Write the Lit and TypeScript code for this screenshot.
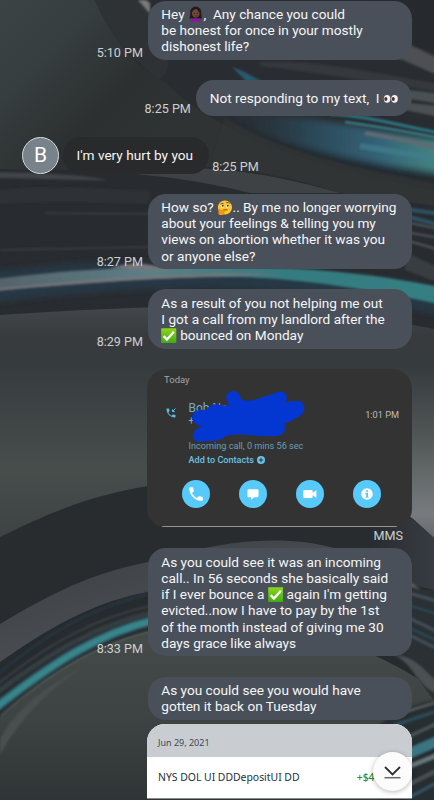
import { LitElement, html, css, svg } from "lit";
import { customElement, property } from "lit/decorators.js";

const woman = html`<svg class="emoji" viewBox="0 0 16 16">
  <path d="M8 .8C4.2.8 2.2 3.4 2.3 7c0 2.700-.3 4.600-1 6h13.400c-.7-1.400-1-3.300-1-6C13.800 3.400 11.800.8 8 .8z" fill="#211b1e"/>
  <ellipse cx="8" cy="7.400" rx="3.900" ry="4.600" fill="#71483b"/>
  <path d="M4 7c.3-2.600 2-3.300 5-4l2.800 4.200.4-3.200L8 1.500 4 3.500z" fill="#211b1e"/>
  <path d="M2.500 16c.1-2.400 1.600-3.200 5.500-3.200s5.400.8 5.500 3.200z" fill="#8d12a8"/>
  <circle cx="6.500" cy="7.600" r=".6" fill="#221513"/><circle cx="9.500" cy="7.600" r=".6" fill="#221513"/>
  <path d="M6.600 10q1.400.9 2.800 0" stroke="#3c1d18" stroke-width=".7" fill="none"/>
</svg>`;

const think = html`<svg class="emoji" viewBox="0 0 16 16">
  <circle cx="8.200" cy="7.700" r="7.300" fill="#fcc62e"/>
  <ellipse cx="5.600" cy="6.300" rx="1.500" ry="1.600" fill="#fff"/><ellipse cx="10.800" cy="6.300" rx="1.500" ry="1.600" fill="#fff"/>
  <circle cx="5.900" cy="5.900" r="1" fill="#3d2a20"/><circle cx="11.100" cy="5.900" r="1" fill="#3d2a20"/>
  <path d="M3.600 4.200q1.600-1 3.200-.4M9.600 2.900q2-.9 3.600.5M6.500 10.300q2.200-1 4.500 0" stroke="#6b4418" stroke-width=".9" fill="none"/>
  <path d="M2 9.800c.9-.7 1.500.1 1.600 1l4.600-.7c1.200 0 1.200 1.300.2 1.500l-1.700.4c1.300.5.9 3.900-2.200 4-2.700.1-3.600-2-2.500-6.200z" fill="#f09a1c" stroke="#c97410" stroke-width=".4"/>
</svg>`;

const check = html`<svg class="emoji" viewBox="0 0 16 16">
  <defs><linearGradient id="g" x1="0" y1="0" x2="0" y2="1"><stop stop-color="#8ed61b"/><stop offset="1" stop-color="#3dab12"/></linearGradient></defs>
  <rect x=".2" y=".2" width="15.600" height="15.600" rx=".6" fill="url(#g)"/>
  <path d="M2.800 8.400l3.300 3.500 7.200-8" stroke="#fff" stroke-width="2.400" fill="none"/>
</svg>`;

const eyes = html`<svg class="emoji" viewBox="0 0 16 16">
  <ellipse cx="4.200" cy="8" rx="3.400" ry="4" fill="#f4f1f0"/><ellipse cx="11.900" cy="8" rx="3.400" ry="4" fill="#f4f1f0"/>
  <ellipse cx="2.900" cy="8.200" rx="1.600" ry="2" fill="#4a3330"/><ellipse cx="10.600" cy="8.200" rx="1.600" ry="2" fill="#4a3330"/>
</svg>`;

const phonePath =
  "M6.600 10.800c1.400 2.800 3.800 5.100 6.600 6.600l2.200-2.200c.3-.3.700-.4 1-.2 1.100.4 2.300.6 3.600.6.600 0 1 .4 1 1V20c0 .6-.4 1-1 1C10.600 21 3 13.400 3 4c0-.6.400-1 1-1h3.500c.6 0 1 .4 1 1 0 1.200.2 2.400.6 3.600.1.300 0 .7-.2 1z";

const actions = [
  svg`<path d=${phonePath} transform="translate(-3.600 -3.600) scale(1.300)"/>`,
  svg`<path d="M4.500 4h15a2 2 0 0 1 2 2v9.500a2 2 0 0 1-2 2h-5.600L9 21.800v-4.300H4.500a2 2 0 0 1-2-2V6a2 2 0 0 1 2-2z"/>`,
  svg`<path d="M2 5.200h13a1.500 1.500 0 0 1 1.500 1.500v3.300L23 5.500v13L16.500 14v3.300a1.500 1.500 0 0 1-1.500 1.500H2a1.500 1.500 0 0 1-1.500-1.500V6.700A1.500 1.500 0 0 1 2 5.200z"/>`,
  svg`<circle cx="12" cy="12" r="10"/><path d="M10.600 5.700h3v2.600h-3zM9 10h4.600v6.500H15v1.700H9v-1.700h1.700v-4.800H9z" fill="#52bdec"/>`,
];

@customElement("wall-paper")
class WallPaper extends LitElement {
  static styles = css`
    :host { display: block; }
    svg { display: block; width: 434px; height: 800px; }
  `;
  render() {
    return html`<svg viewBox="0 0 434 800" fill="none">
      <defs>
        <linearGradient id="top" x1="0" y1="0" x2="150" y2="150" gradientUnits="userSpaceOnUse"><stop stop-color="#3b4444"/><stop offset=".35" stop-color="#363d3e"/><stop offset=".7" stop-color="#2c3031"/><stop offset="1" stop-color="#303333"/></linearGradient>
        <linearGradient id="mid" x1="0" y1="305" x2="0" y2="540" gradientUnits="userSpaceOnUse"><stop stop-color="#45484a"/><stop offset=".13" stop-color="#383b3d"/><stop offset=".25" stop-color="#363b3e"/><stop offset=".4" stop-color="#3c4243"/><stop offset=".7" stop-color="#464d4b"/><stop offset="1" stop-color="#3d4342"/></linearGradient>
        <linearGradient id="right" x1="0" y1="369" x2="0" y2="540" gradientUnits="userSpaceOnUse"><stop stop-color="#373c3f"/><stop offset=".4" stop-color="#515757"/><stop offset=".85" stop-color="#777b7d"/><stop offset="1" stop-color="#65696c"/></linearGradient>
        <linearGradient id="low" x1="0" y1="640" x2="0" y2="800" gradientUnits="userSpaceOnUse"><stop stop-color="#444a48"/><stop offset=".5" stop-color="#3d4342"/><stop offset="1" stop-color="#2f3436"/></linearGradient>
        <linearGradient id="beam" x1="0" y1="0" x2="434" y2="0" gradientUnits="userSpaceOnUse"><stop stop-color="#56636b"/><stop offset=".35" stop-color="#5d7f86"/><stop offset=".65" stop-color="#347b80"/><stop offset="1" stop-color="#347f83"/></linearGradient>
        <linearGradient id="blue" x1="225" y1="0" x2="434" y2="0" gradientUnits="userSpaceOnUse"><stop stop-color="#25333d" stop-opacity="0"/><stop offset=".4" stop-color="#2b4655"/><stop offset=".75" stop-color="#346478"/><stop offset="1" stop-color="#438281"/></linearGradient>
        <linearGradient id="band" x1="0" y1="550" x2="30" y2="650" gradientUnits="userSpaceOnUse"><stop stop-color="#3b4043"/><stop offset="1" stop-color="#484b50"/></linearGradient>
        <linearGradient id="shade" x1="370" y1="0" x2="434" y2="0" gradientUnits="userSpaceOnUse"><stop stop-color="#282c2f"/><stop offset="1" stop-color="#373c42"/></linearGradient>
        <filter id="b1" x="-10%" y="-50%" width="120%" height="200%"><feGaussianBlur stdDeviation=".8"/></filter>
        <filter id="b3" x="-10%" y="-50%" width="120%" height="200%"><feGaussianBlur stdDeviation="3"/></filter>
      </defs>
      <rect width="434" height="800" fill="url(#top)"/>
      <path d="M95 0C110 30 125 60 165 82C215 132 300 165 434 190V0z" fill="#292c30"/>
      <path d="M95 0C105 25 120 50 160 80C185 60 150 20 140 0z" fill="#2e3234"/>
      <g filter="url(#b1)">
        <path d="M138 0L150 14V3L146 0z" fill="#77797a"/>
        <path d="M370 30C395 46 415 48 434 53V-5H370z" fill="#282b2e"/>
        <path d="M400 42C414 46 425 52 440 59V76C420 68 405 60 396 58z" fill="#4d5053"/>
        <path d="M260 62C320 60 370 72 440 84V92C360 80 310 72 260 66z" fill="#35393d"/>
        <path d="M232 67C245 71 250 76 262 81H246z" fill="#2c5a70"/>
        <path d="M410 90L440 94V104L410 99z" fill="#4a5154"/>
        <path d="M410 103L440 106V117L405 110z" fill="#4b5152"/>
      </g>
      <g filter="url(#b3)">
        <path d="M218 114C290 110 370 130 445 141V174C350 161 280 145 218 114z" fill="url(#blue)"/>
        <path d="M230 121C300 153 370 162 445 177V184C340 171 275 152 230 121z" fill="#222b31"/>
      </g>
      <path d="M225 117C275 150 345 166 434 183V206C400 203 370 198 340 193C300 180 250 168 210 167z" fill="#303436" opacity=".75" filter="url(#b1)"/>
      <g filter="url(#b1)">
        <path d="M330 114C370 116 400 126 440 133" stroke="#2c7784" stroke-width="3"/>
        <path d="M345 122C380 127 405 131 440 138" stroke="#3a8994" stroke-width="2"/>
        <path d="M365 133C400 139 415 142 440 149" stroke="#626b72" stroke-width="4"/>
        <path d="M360 146C390 151 410 154 440 159" stroke="#3f7f8b" stroke-width="6" opacity=".7"/>
      </g>
      <path d="M0 169C70 173 120 166 190 167C250 167 300 180 340 193C380 200 410 202 434 206V350H0z" fill="#282b2f"/>
      <path d="M105 172C180 165 245 165 340 193H250C210 183 165 175 105 172z" fill="#3f4245"/>
      <g filter="url(#b1)">
        <path d="M-5 172C40 173 75 174 108 180C75 181 40 178 -5 178z" fill="#404447"/>
        <path d="M-5 190C70 183 100 190 150 190V204C90 202 40 202 -5 204z" fill="#2e3135"/>
        <path d="M45 213L150 214" stroke="#464a4c" stroke-width="1"/>
        <path d="M0 250L150 247" stroke="#3c4043" stroke-width="1.500"/>
        <path d="M405 209L440 214M405 216L440 225" stroke="#2d5362" stroke-width="4"/>
        <path d="M405 222L440 229M405 232L440 238M405 240L440 250" stroke="#50585a" stroke-width="2"/>
        <path d="M405 252L440 268V283L405 270z" fill="#383e3f"/>
      </g>
      <path d="M-10 272C120 255 260 258 445 288V316C270 277 130 286 -10 303z" fill="#253944" filter="url(#b3)"/>
      <g filter="url(#b1)">
        <path d="M-5 279C90 267 140 268 200 267C300 266 370 273 440 287V304C370 290 310 279 240 277C140 277 65 285 -5 291z" fill="url(#beam)"/>
        <path d="M-5 289C80 281 160 272 285 274C180 277 90 282 -5 291z" fill="#777579"/>
        <path d="M110 268C132 261 150 263 170 270z" fill="#78777a"/>
      </g>
      <path d="M0 315C75 310 130 307 200 307C310 307 380 318 434 329V550H0z" fill="url(#mid)"/>
      <path d="M400 369H434V545H400z" fill="url(#right)"/>
      <path d="M0 537C55 510 90 496 148 486C240 470 330 475 412 518L434 538V800H0z" fill="#282c2f"/>
      <path d="M370 500L412 518L434 538V620H370z" fill="url(#shade)"/>
      <path d="M0 624C65 585 100 572 148 562C220 541 280 534 330 547C350 552 368 562 380 570V690H0z" fill="url(#band)"/>
      <path d="M0 662C60 620 100 601 148 592C260 575 380 575 434 590V800H0z" fill="#262b2e"/>
      <g filter="url(#b1)">
        <path d="M-5 676C55 627 95 607 155 592" stroke="#27343e" stroke-width="3"/>
        <path d="M-5 686C50 643 95 617 155 605" stroke="#42474a" stroke-width="1.500"/>
        <path d="M-5 694C50 653 95 625 155 612" stroke="#363c40" stroke-width="5"/>
        <path d="M-6 709C55 661 100 633 155 620" stroke="#2d5664" stroke-width="10"/>
        <path d="M-6 709C55 661 100 633 155 620" stroke="#39858a" stroke-width="6"/>
      </g>
      <path d="M0 717C50 671 100 642 155 630C250 610 360 635 434 690V800H0z" fill="url(#low)"/>
      <path d="M0 716C50 671 100 642 155 630" stroke="#565c5b" stroke-width="1.500" filter="url(#b1)"/>
      <path d="M0 740C15 708 50 684 85 666C50 688 20 718 0 755z" fill="#484f4e" filter="url(#b1)"/>
      <path d="M390 590L434 590V700C420 684 412 665 390 648z" fill="#2b3034"/>
      <g filter="url(#b1)">
        <path d="M398 572L421 590L400 584z" fill="#5a5e62"/>
        <path d="M405 592L440 602M405 616L440 633M405 633L440 650" stroke="#44515a" stroke-width="3"/>
        <path d="M405 604L440 615M405 626L440 642" stroke="#274d5c" stroke-width="2"/>
        <path d="M394 655C414 657 419 664 440 685V695C415 686 416 665 394 655z" fill="#4b5153"/>
        <path d="M380 724C402 708 415 704 440 699V805H380z" fill="#282e32"/>
        <path d="M405 712L440 701" stroke="#5c6264" stroke-width="2"/>
        <path d="M395 725L440 710" stroke="#2d4d5a" stroke-width="3"/>
        <path d="M408 737L440 722" stroke="#4b5557" stroke-width="3"/>
        <path d="M408 754L440 740" stroke="#3b7480" stroke-width="10"/>
        <path d="M408 767L440 754" stroke="#6a7a7e" stroke-width="4"/>
        <path d="M408 785L440 769" stroke="#495053" stroke-width="4"/>
        <path d="M408 798L440 781" stroke="#355563" stroke-width="3"/>
      </g>
    </svg>`;
  }
}

@customElement("chat-row")
class ChatRow extends LitElement {
  @property() time = "";
  @property({ type: Boolean, reflect: true }) received = false;
  @property({ attribute: false }) lines: unknown[] = [];
  static styles = css`
    :host { display: flex; justify-content: flex-end; align-items: flex-end; gap: 5px; padding-right: 22.300px; }
    :host([received]) { flex-direction: row-reverse; padding: 0 0 0 22px; gap: 3px; }
    .bubble { box-sizing: border-box; min-height: 36.300px; padding: 5.400px 13.300px 5.500px; border-radius: 18px; background: #4a505a; color: #f5f6f7;
      display: flex; flex-direction: column; justify-content: center; font-size: 13.640px; line-height: 16.200px; }
    .short { padding-left: 13.800px; }
    .wide { width: 263.700px; }
    .dark { background: #292a2b; width: 146px; margin-left: 1.300px; }
    .line { white-space: pre; height: 16.200px; }
    .emoji { width: 15.500px; height: 15.500px; vertical-align: -3px; }
    .time { font-size: 12.600px; line-height: 15px; color: #cdcfd0; white-space: nowrap; }
    .avatar { box-sizing: border-box; width: 37px; height: 37px; border-radius: 50%; border: 1.200px solid #d5d9da; background: #78828a; color: #fff;
      font-size: 21px; line-height: 35px; text-align: center; }
  `;
  render() {
    const kind = this.lines.length > 1 ? "wide" : this.received ? "dark" : "short";
    return html`
      ${this.time ? html`<span class="time">${this.time}</span>` : ""}
      <div class="bubble ${kind}">${this.lines.map((l) => html`<div class="line">${l}</div>`)}</div>
      ${this.received ? html`<div class="avatar">B</div>` : ""}
    `;
  }
}

@customElement("call-card")
class CallCard extends LitElement {
  static styles = css`
    :host { display: block; position: relative; box-sizing: border-box; width: 265px; height: 158px; margin: 0 22px 0 147px; border-radius: 20px 20px 18px 18px;
      background: #333; padding: 5px 13px 0 17px; overflow: hidden; }
    .day { font-size: 9.500px; line-height: 12px; color: #a5a5a5; }
    .entry { display: grid; grid-template-columns: 24.500px 1fr auto; margin-top: 16px; }
    .in { width: 12px; height: 12px; margin: 5px 0 0 1px; }
    .name { font-size: 12px; line-height: 13px; color: #72abc3; }
    .num { font-size: 10px; line-height: 12px; color: #a5a9aa; }
    .info { font-size: 9.150px; line-height: 12px; color: #699fb4; margin-top: 13px; white-space: nowrap; }
    .add { display: flex; align-items: center; gap: 3px; font-size: 9.100px; font-weight: 500; line-height: 12px; color: #69c3e8; margin-top: 2px; white-space: nowrap; }
    .add svg { width: 8px; height: 8px; }
    .at { font-size: 9.200px; line-height: 12px; color: #bcbcbc; padding-top: 7px; }
    .scribble { position: absolute; left: 40px; top: 18px; width: 122px; height: 60px; }
    .acts { display: flex; justify-content: space-between; padding: 0 18px 0 18px; margin-top: 14px; }
    .act { width: 28.400px; height: 28.400px; border-radius: 50%; background: #58cafa; display: grid; place-items: center; }
    .act svg { width: 14px; height: 14px; fill: #fff; }
    .rule { position: absolute; left: 15px; right: 15px; bottom: 0; height: 1px; background: #939494; }
  `;
  render() {
    return html`
      <div class="day">Today</div>
      <div class="entry">
        <svg class="in" viewBox="0 0 24 24"><path d=${phonePath} fill="#57bce6"/><path d="M21 3l-6 6M15 4.500V9h4.500" stroke="#57bce6" stroke-width="2" fill="none"/></svg>
        <div>
          <div class="name">Bob Na</div>
          <div class="num">+1</div>
          <div class="info">Incoming call, 0 mins 56 sec</div>
          <div class="add">Add to Contacts
            <svg viewBox="0 0 16 16"><circle cx="8" cy="8" r="8" fill="#69c3e8"/><path d="M8 3.500v9M3.500 8h9" stroke="#333" stroke-width="2"/></svg>
          </div>
        </div>
        <div class="at">1:01 PM</div>
      </div>
      <svg class="scribble" viewBox="187 387 122 60"><path d="M233 391C238 391 240 396 242 400Q250 402 260 398L278 392C286 389 289 399 285 402Q292 401 298 401C306 401 307 413 298 417Q290 422 284 424C288 433 280 437 270 436C255 437 240 432 226 436C220 443 206 440 199 442C192 442 191 431 198 428L203 426C191 426 189 415 196 411Q201 409 206 410Q212 402 220 405Q225 405 229 406Q227 400 226 398C227 393 229 391 233 391z" fill="#0437d2"/></svg>
      <div class="acts">${actions.map((a) => html`<div class="act"><svg viewBox="0 0 24 24">${a}</svg></div>`)}</div>
      <div class="rule"></div>
    `;
  }
}

@customElement("bank-card")
class BankCard extends LitElement {
  static styles = css`
    :host { display: block; box-sizing: border-box; width: 265px; height: 75px; margin: 0 22px 0 147px; border-radius: 18px 18px 0 0; overflow: hidden; background: #fff;
      color: #22303d; font-family: "Noto Sans", sans-serif; border-bottom: 1px solid #8a8c8d; }
    .date { background: #c9cdd1; height: 33.500px; line-height: 37px; padding-left: 11px; font-size: 9px; color: #3b4957; }
    .tx { display: flex; justify-content: space-between; line-height: 41px; padding: 0 31.500px 0 11px; font-size: 10.400px; white-space: nowrap; }
    .sum { color: #2b8a36; font-weight: 500; }
  `;
  render() {
    return html`<div class="date">Jun 29, 2021</div>
      <div class="tx"><span>NYS DOL UI DDDepositUI DD</span><span class="sum">+$48</span></div>`;
  }
}

@customElement("app-root")
class AppRoot extends LitElement {
  static styles = css`
    :host { display: block; position: relative; width: 434px; height: 800px; overflow: hidden; font-family: Roboto, sans-serif; background: #2e3233; }
    wall-paper { position: absolute; inset: 0; }
    .thread { position: relative; display: flex; flex-direction: column; gap: 20.100px; padding-top: .6px; }
    .group { display: flex; flex-direction: column; }
    .mms { align-self: flex-end; margin-right: 31px; font-size: 12.600px; line-height: 15px; color: #cdcfd0; padding: 1px 0 5.500px; }
    bank-card { margin-top: 4px; }
    .jump { position: absolute; left: 373px; top: 751.500px; width: 39px; height: 39px; border-radius: 50%; background: #fcfcfc; box-shadow: 0 1px 5px rgba(0,0,0,.28); }
    .jump svg { display: block; width: 39px; height: 39px; }
  `;
  render() {
    return html`
      <wall-paper></wall-paper>
      <div class="thread">
        <chat-row time="5:10 PM" .lines=${[html`Hey ${woman},  Any chance you could`, "be honest for once in your mostly", "dishonest life?"]}></chat-row>
        <chat-row time="8:25 PM" .lines=${[html`Not responding to my text,  I ${eyes}`]}></chat-row>
        <chat-row received time="8:25 PM" .lines=${["I'm very hurt by you"]}></chat-row>
        <chat-row time="8:27 PM" .lines=${[html`How so? ${think}.. By me no longer worrying`, "about your feelings & telling you my", "views on abortion whether it was you", "or anyone else?"]}></chat-row>
        <chat-row time="8:29 PM" .lines=${["As a result of you not helping me out", "I got a call from my landlord after the", html`${check} bounced on Monday`]}></chat-row>
        <div class="group">
          <call-card></call-card>
          <div class="mms">MMS</div>
          <chat-row time="8:33 PM" .lines=${["As you could see it was an incoming", "call.. In 56 seconds she basically said", html`if I ever bounce a ${check} again I'm getting`, "evicted..now I have to pay by the 1st", "of the month instead of giving me 30", "days grace like always"]}></chat-row>
        </div>
        <div class="group">
          <chat-row .lines=${["As you could see you would have", "gotten it back on Tuesday"]}></chat-row>
          <bank-card></bank-card>
        </div>
      </div>
      <div class="jump"><svg viewBox="0 0 39 39" fill="none"><path d="M12 15l7.500 7.500L27 15" stroke="#303030" stroke-width="1.800"/><path d="M11.500 25.700h16" stroke="#686868" stroke-width="1.500"/></svg></div>
    `;
  }
}
